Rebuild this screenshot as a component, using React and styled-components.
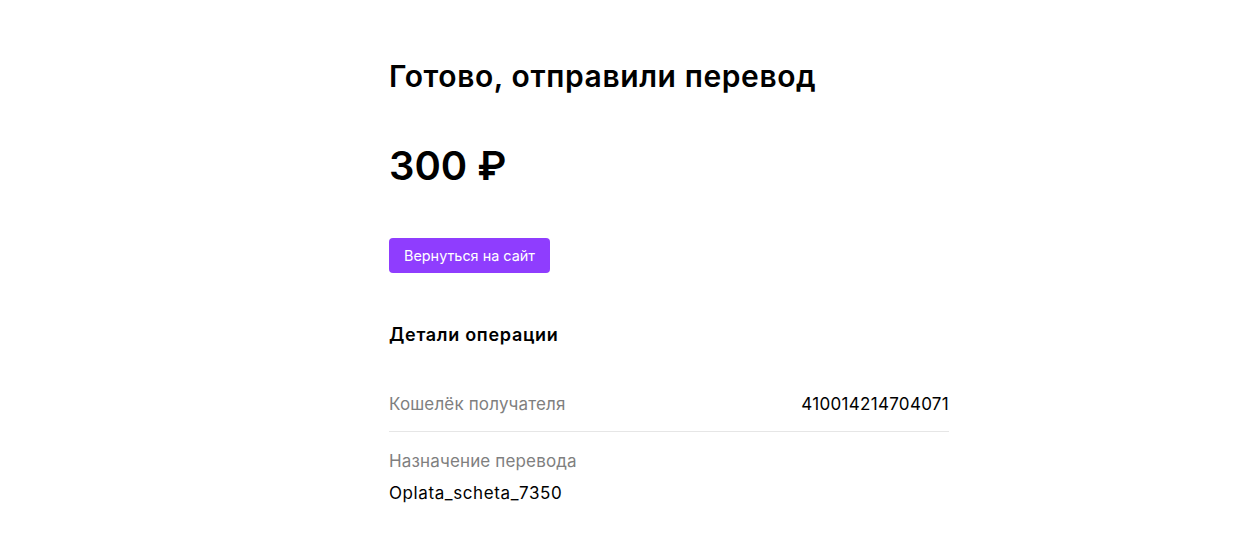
import React from "react";
import styled, { createGlobalStyle } from "styled-components";

const GlobalStyle = createGlobalStyle`
  body {
    margin: 0;
    background: #ffffff;
    font-family: "Inter", "Noto Sans", sans-serif;
    color: #000;
  }
`;

const Page = styled.div`
  display: flex;
  justify-content: center;
  padding: 56px 0 0 80px;
`;

const Content = styled.div`
  width: 560px;
`;

const Title = styled.h1`
  margin: 0;
  font-size: 30px;
  line-height: 40px;
  font-weight: 600;
  letter-spacing: 0.6px;
`;

const Amount = styled.div`
  margin-top: 46px;
  font-size: 40px;
  line-height: 48px;
  font-weight: 600;
`;

const BackButton = styled.button`
  margin-top: 48px;
  height: 35px;
  padding: 0 15px;
  border: none;
  border-radius: 4px;
  background: #8f3dfe;
  color: #fff;
  font-family: inherit;
  font-size: 14.4px;
  cursor: pointer;
`;

const SectionTitle = styled.h2`
  margin: 50px 0 0;
  font-size: 18px;
  line-height: 24px;
  font-weight: 600;
  letter-spacing: 0.7px;
`;

const Details = styled.div`
  margin-top: 46px;
`;

const Row = styled.div`
  display: flex;
  flex-direction: ${(p) => (p.$stacked ? "column" : "row")};
  justify-content: space-between;
  align-items: ${(p) => (p.$stacked ? "flex-start" : "center")};
  gap: ${(p) => (p.$stacked ? "10px" : "0")};
  padding: ${(p) => (p.$stacked ? "18px 0 0" : "0 0 16px")};
  border-bottom: ${(p) => (p.$divider ? "1px solid #e6e6e6" : "none")};
`;

const Label = styled.span`
  font-size: 17px;
  line-height: 22px;
  color: #7f7f7f;
  letter-spacing: 0.15px;
`;

const Value = styled.span`
  font-size: 17px;
  line-height: 22px;
  color: #000;
  letter-spacing: ${(p) => (p.$number ? "0.3px" : "0.6px")};
`;

export default function App() {
  return (
    <>
      <GlobalStyle />
      <Page>
        <Content>
          <Title>Готово, отправили перевод</Title>
          <Amount>300 ₽</Amount>
          <BackButton>Вернуться на сайт</BackButton>
          <SectionTitle>Детали операции</SectionTitle>
          <Details>
            <Row $divider>
              <Label>Кошелёк получателя</Label>
              <Value $number>410014214704071</Value>
            </Row>
            <Row $stacked>
              <Label>Назначение перевода</Label>
              <Value>Oplata_scheta_7350</Value>
            </Row>
          </Details>
        </Content>
      </Page>
    </>
  );
}
